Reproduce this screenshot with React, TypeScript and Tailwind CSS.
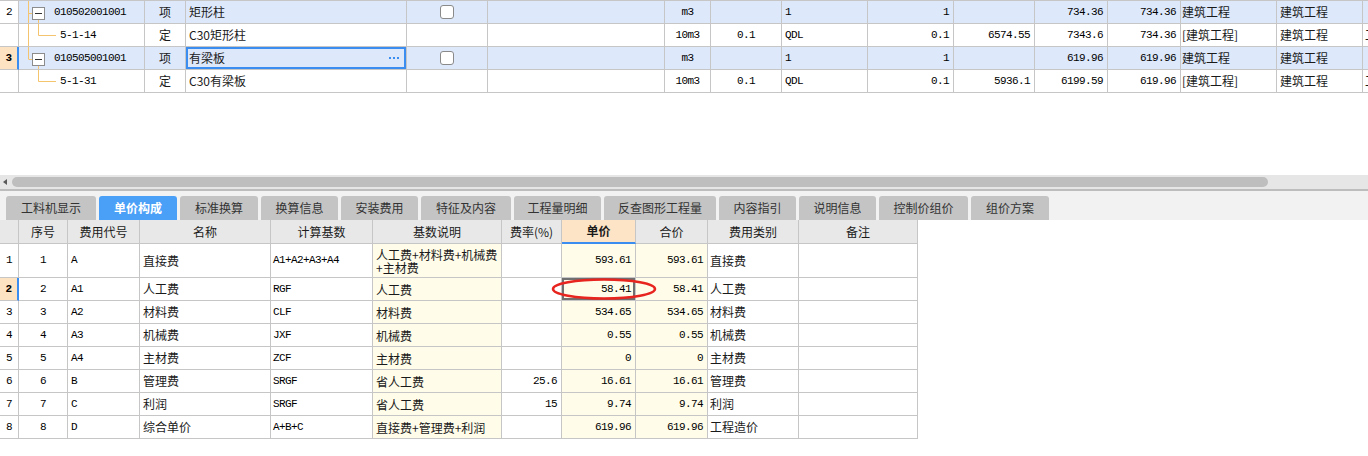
import React from "react";

type TopRow = {
  hdr: string;
  kind: "item" | "sub";
  last?: boolean;
  code: string;
  type: string;
  name: string;
  unit: string;
  qty: string;
  expr: string;
  amount: string;
  price: string;
  unitPrice: string;
  total: string;
  cat: string;
  major: string;
  extra: string;
  selected?: boolean;
};

const topRows: TopRow[] = [
  { hdr: "2", kind: "item", code: "010502001001", type: "项", name: "矩形柱", unit: "m3", qty: "", expr: "1", amount: "1", price: "", unitPrice: "734.36", total: "734.36", cat: "建筑工程", major: "建筑工程", extra: "" },
  { hdr: "", kind: "sub", code: "5-1-14", type: "定", name: "C30矩形柱", unit: "10m3", qty: "0.1", expr: "QDL", amount: "0.1", price: "6574.55", unitPrice: "7343.6", total: "734.36", cat: "[建筑工程]", major: "建筑工程", extra: "工程" },
  { hdr: "3", kind: "item", last: true, code: "010505001001", type: "项", name: "有梁板", unit: "m3", qty: "", expr: "1", amount: "1", price: "", unitPrice: "619.96", total: "619.96", cat: "建筑工程", major: "建筑工程", extra: "", selected: true },
  { hdr: "", kind: "sub", last: true, code: "5-1-31", type: "定", name: "C30有梁板", unit: "10m3", qty: "0.1", expr: "QDL", amount: "0.1", price: "5936.1", unitPrice: "6199.59", total: "619.96", cat: "[建筑工程]", major: "建筑工程", extra: "工程" },
];

const tabs = [
  { label: "工料机显示", w: "w-[90px]" },
  { label: "单价构成", w: "w-[78px]" },
  { label: "标准换算", w: "w-[78px]" },
  { label: "换算信息", w: "w-[77px]" },
  { label: "安装费用", w: "w-[77px]" },
  { label: "特征及内容", w: "w-[90px]" },
  { label: "工程量明细", w: "w-[87px]" },
  { label: "反查图形工程量", w: "w-[112px]" },
  { label: "内容指引", w: "w-[77px]" },
  { label: "说明信息", w: "w-[77px]" },
  { label: "控制价组价", w: "w-[89px]" },
  { label: "组价方案", w: "w-[78px]" },
];

type CostRow = {
  no: string;
  code: string;
  name: string;
  base: string;
  desc: string;
  rate: string;
  price: string;
  total: string;
  cat: string;
};

const costRows: CostRow[] = [
  { no: "1", code: "A", name: "直接费", base: "A1+A2+A3+A4", desc: "人工费+材料费+机械费\n+主材费", rate: "", price: "593.61", total: "593.61", cat: "直接费" },
  { no: "2", code: "A1", name: "人工费", base: "RGF", desc: "人工费", rate: "", price: "58.41", total: "58.41", cat: "人工费" },
  { no: "3", code: "A2", name: "材料费", base: "CLF", desc: "材料费", rate: "", price: "534.65", total: "534.65", cat: "材料费" },
  { no: "4", code: "A3", name: "机械费", base: "JXF", desc: "机械费", rate: "", price: "0.55", total: "0.55", cat: "机械费" },
  { no: "5", code: "A4", name: "主材费", base: "ZCF", desc: "主材费", rate: "", price: "0", total: "0", cat: "主材费" },
  { no: "6", code: "B", name: "管理费", base: "SRGF", desc: "省人工费", rate: "25.6", price: "16.61", total: "16.61", cat: "管理费" },
  { no: "7", code: "C", name: "利润", base: "SRGF", desc: "省人工费", rate: "15", price: "9.74", total: "9.74", cat: "利润" },
  { no: "8", code: "D", name: "综合单价", base: "A+B+C", desc: "直接费+管理费+利润", rate: "", price: "619.96", total: "619.96", cat: "工程造价" },
];

const cjk = "font-['Noto_Sans_CJK_SC',sans-serif] text-[12px] leading-[14px] text-[#1a1a1a]";
const mono = "font-['Liberation_Mono','Noto_Sans_CJK_SC',monospace] text-[11px] tracking-[-0.6px] text-black";
const cell = "flex items-center overflow-hidden whitespace-nowrap border-r border-b border-[#c6c6c6]";

function TreeLines({ row }: { row: TopRow }) {
  const line = "#f5c46e";
  if (row.kind === "item") {
    return (
      <svg width="30" height="22" className="shrink-0">
        <line x1="9.5" y1="0" x2="9.5" y2={row.last ? 12 : 22} stroke={line} />
        <line x1="9.5" y1="12.5" x2="13" y2="12.5" stroke={line} />
        <line x1="19.5" y1="19" x2="19.5" y2="22" stroke={line} />
        <rect x="13.5" y="6.5" width="12" height="12" fill="#fff" stroke="#8c8c8c" />
        <line x1="16" y1="12.5" x2="23" y2="12.5" stroke="#333" />
      </svg>
    );
  }
  return (
    <svg width="40" height="22" className="shrink-0">
      {!row.last && <line x1="9.5" y1="0" x2="9.5" y2="22" stroke={line} />}
      <line x1="19.5" y1="0" x2="19.5" y2="11.5" stroke={line} />
      <line x1="19.5" y1="11.5" x2="37" y2="11.5" stroke={line} />
    </svg>
  );
}

function Checkbox() {
  return <div className="h-[14px] w-[14px] rounded-[3px] border border-[#8a8a8a] bg-white" />;
}

function Ellipsis() {
  return (
    <div className="flex items-center gap-[2px]">
      <span className="h-[2px] w-[2px] bg-[#3c8df0]" />
      <span className="h-[2px] w-[2px] bg-[#3c8df0]" />
      <span className="h-[2px] w-[2px] bg-[#3c8df0]" />
    </div>
  );
}

export default function App() {
  return (
    <div className="relative h-[456px] w-[1368px] overflow-hidden bg-white">
      {/* upper grid */}
      <div className="h-[175px] overflow-hidden">
        <div className="w-max border-t border-[#c6c6c6]">
          {topRows.map((row, i) => {
            const bg = row.kind === "item" ? "bg-[#dde8fa]" : "bg-white";
            return (
              <div
                key={i}
                className={`grid h-[23px] grid-cols-[19px_126px_41px_221px_81px_177px_46px_71px_86px_86px_81px_73px_73px_96px_86px_60px] ${bg}`}
              >
                <div
                  className={`${cell} justify-center ${mono} ${
                    row.selected
                      ? "border-r-2 border-r-[#3c8df0] bg-[#fde3c2] font-bold"
                      : "bg-white"
                  }`}
                >
                  {row.hdr}
                </div>
                <div className={`${cell} items-stretch`}>
                  <TreeLines row={row} />
                  <span className={`${mono} flex items-center ${row.kind === "item" ? "pl-[5px]" : "pl-[1px]"}`}>
                    {row.code}
                  </span>
                </div>
                <div className={`${cell} justify-center ${cjk}`}>{row.type}</div>
                <div
                  className={`${cell} justify-between pl-[3px] pr-[7px] ${cjk} ${
                    row.selected ? "shadow-[inset_0_0_0_2px_#3c8df0]" : ""
                  }`}
                >
                  <span>{row.name}</span>
                  {row.selected && <Ellipsis />}
                </div>
                <div className={`${cell} justify-center`}>{row.kind === "item" && <Checkbox />}</div>
                <div className={cell} />
                <div className={`${cell} justify-center ${mono}`}>{row.unit}</div>
                <div className={`${cell} justify-center ${mono}`}>{row.qty}</div>
                <div className={`${cell} pl-[3px] ${mono}`}>{row.expr}</div>
                <div className={`${cell} justify-end pr-[4px] ${mono}`}>{row.amount}</div>
                <div className={`${cell} justify-end pr-[4px] ${mono}`}>{row.price}</div>
                <div className={`${cell} justify-end pr-[4px] ${mono}`}>{row.unitPrice}</div>
                <div className={`${cell} justify-end pr-[4px] ${mono}`}>{row.total}</div>
                <div className={`${cell} pl-[1px] ${cjk}`}>{row.cat}</div>
                <div className={`${cell} pl-[3px] ${cjk}`}>{row.major}</div>
                <div className={`${cell} pl-[2px] ${cjk}`}>{row.extra}</div>
              </div>
            );
          })}
        </div>
      </div>

      {/* horizontal scrollbar */}
      <div className="flex h-[14px] items-center bg-[#e6e6e6]">
        <div className="ml-[3px] h-0 w-0 border-y-[3px] border-r-[4px] border-y-transparent border-r-[#5a5a5a]" />
        <div className="ml-[5px] h-[10px] w-[1256px] rounded-full bg-[#bebebe]" />
      </div>
      <div className="h-[2px] bg-[#bdbdbd]" />

      {/* tabs */}
      <div className="flex h-[29px] items-end gap-[3px] bg-[#f2f2f2] pl-[6px]">
        {tabs.map((t) => {
          const active = t.label === "单价构成";
          return (
            <div
              key={t.label}
              className={`flex h-[24px] items-center justify-center rounded-t-[3px] font-['Noto_Sans_CJK_SC',sans-serif] text-[12px] ${t.w} ${
                active ? "bg-[#4a9ff7] font-bold text-white" : "bg-[#c4c4c4] text-[#333]"
              }`}
            >
              {t.label}
            </div>
          );
        })}
      </div>

      {/* cost breakdown table */}
      <div className="w-[918px]">
        <div className="grid h-[24px] grid-cols-[19px_49px_72px_131px_102px_129px_60px_74px_72px_91px_119px] bg-[#e8e8e8]">
          {["", "序号", "费用代号", "名称", "计算基数", "基数说明", "费率(%)", "单价", "合价", "费用类别", "备注"].map((h, i) => (
            <div
              key={i}
              className={`${cell} justify-center ${cjk} ${
                h === "单价" ? "border-b-2 border-b-[#3c8df0] bg-[#fde4c6] font-bold" : ""
              }`}
            >
              {h}
            </div>
          ))}
        </div>
        {costRows.map((r, i) => {
          const sel = r.no === "2";
          const tall = i === 0;
          return (
            <div
              key={r.no}
              className={`grid grid-cols-[19px_49px_72px_131px_102px_129px_60px_74px_72px_91px_119px] ${
                tall ? "h-[34px]" : "h-[23px]"
              }`}
            >
              <div
                className={`${cell} justify-center ${mono} ${
                  sel ? "border-r-2 border-r-[#3c8df0] bg-[#fde3c2] font-bold" : ""
                }`}
              >
                {r.no}
              </div>
              <div className={`${cell} justify-center ${mono}`}>{r.no}</div>
              <div className={`${cell} pl-[3px] ${mono}`}>{r.code}</div>
              <div className={`${cell} pl-[3px] ${cjk}`}>{r.name}</div>
              <div className={`${cell} pl-[2px] ${mono}`}>{r.base}</div>
              <div className={`${cell} bg-[#fffdea] pl-[3px] ${cjk}`}>
                <span className="whitespace-pre leading-[13px]">{r.desc}</span>
              </div>
              <div className={`${cell} justify-end pr-[4px] ${mono}`}>{r.rate}</div>
              <div
                className={`${cell} justify-end bg-[#fffdea] pr-[4px] ${mono} ${
                  sel ? "shadow-[inset_0_0_0_2px_#707070]" : ""
                }`}
              >
                {r.price}
              </div>
              <div className={`${cell} justify-end bg-[#fffdea] pr-[4px] ${mono}`}>{r.total}</div>
              <div className={`${cell} pl-[2px] ${cjk}`}>{r.cat}</div>
              <div className={cell} />
            </div>
          );
        })}
      </div>

      {/* red annotation ellipse */}
      <svg className="pointer-events-none absolute left-[551px] top-[277px]" width="106" height="24">
        <ellipse cx="53" cy="12" rx="51" ry="9.5" fill="none" stroke="#e8241f" strokeWidth="2.5" />
      </svg>
    </div>
  );
}
